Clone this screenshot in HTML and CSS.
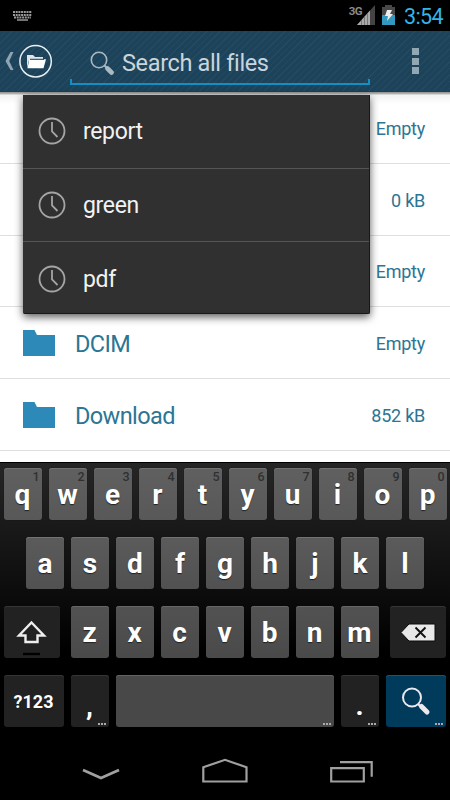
FILE: index.html
```html
<!DOCTYPE html>
<html lang="en">
<head>
<meta charset="utf-8">
<title>Search files</title>
<link rel="stylesheet" href="styles.css">
</head>
<body>
<div class="phone">
  <header class="status">
    <svg class="kbd" width="19" height="10" viewBox="0 0 19 10"><path d="M0 1h19M0 4h19M1 6.500h17" stroke="#999" stroke-width="2" stroke-dasharray="2 .7"/><path d="M4 9h11" stroke="#999" stroke-width="1.500"/></svg>
    <span class="net">3G</span>
    <svg class="signal" width="18" height="20" viewBox="0 0 18 20"><path d="M18 0v20H0z" fill="#444"/><path d="M13 5.600V20H0z" fill="#aaa"/><path d="M4.500 15v5M7.500 11.700v8.300M10.500 8.400v11.600" stroke="#777" stroke-width="1"/></svg>
    <svg class="battery" width="13" height="20" viewBox="0 0 13 20"><path d="M3 0h7v2h3v18H0V2h3z" fill="#484848"/><path d="M0 10h13v10H0z" fill="#3398bf"/><path d="M5 5h5L8 9h3l-6 7 1-5H3z" fill="#eee"/></svg>
    <time class="clock">3:54</time>
  </header>

  <div class="bar">
    <svg class="up" width="54" height="60" viewBox="0 0 54 60">
      <path d="M13.500 21H10.500L5.500 30l5 9h3L9.200 30z" fill="#8ea4b2"/>
      <circle cx="35.600" cy="30.300" r="15.700" fill="none" stroke="#e8f0f3" stroke-width="1.500"/>
      <path d="M27 24h6l2 2h8v3H29l-2 8z" fill="#dfe5e8"/>
      <path d="M29.300 28.300H46l-2.500 9H27.500z" fill="#fff"/><path d="M30 28.300h14" stroke="#17394b"/>
    </svg>
    <div class="field">
      <svg width="24" height="24" viewBox="0 0 24 24"><circle cx="9" cy="9" r="7.700" fill="none" stroke="#a9bac4" stroke-width="1.600"/><path d="M14.500 14.500l2 2" stroke="#a9bac4" stroke-width="2"/><path d="M17.500 17.500l4 4" stroke="#a9bac4" stroke-width="4.600" stroke-linecap="round"/></svg>
      <span class="hint">Search all files</span>
    </div>
    <div class="more"><i></i><i></i><i></i></div>
  </div>

  <main class="list">
    <div class="row"><span class="size">Empty</span></div>
    <div class="row"><span class="size">0 kB</span></div>
    <div class="row"><span class="size">Empty</span></div>
    <div class="row"><svg class="folder" width="32" height="26" viewBox="0 0 32 26"><path d="M0 0h11.500l2.500 5h18v21H0z"/></svg><span class="name">DCIM</span><span class="size">Empty</span></div>
    <div class="row"><svg class="folder" width="32" height="26" viewBox="0 0 32 26"><path d="M0 0h11.500l2.500 5h18v21H0z"/></svg><span class="name">Download</span><span class="size">852 kB</span></div>
    <div class="menu">
      <div class="item"><svg class="recent" width="28" height="28" viewBox="0 0 28 28"><circle cx="14" cy="14" r="12.500"/><path d="M14 5v9.500l5.500 5.500"/></svg>report</div>
      <div class="item"><svg class="recent" width="28" height="28" viewBox="0 0 28 28"><circle cx="14" cy="14" r="12.500"/><path d="M14 5v9.500l5.500 5.500"/></svg>green</div>
      <div class="item"><svg class="recent" width="28" height="28" viewBox="0 0 28 28"><circle cx="14" cy="14" r="12.500"/><path d="M14 5v9.500l5.500 5.500"/></svg>pdf</div>
    </div>
  </main>

  <section class="keyboard">
    <div class="keys k1">
      <b class="key">q<sup>1</sup></b><b class="key">w<sup>2</sup></b><b class="key">e<sup>3</sup></b><b class="key">r<sup>4</sup></b><b class="key">t<sup>5</sup></b><b class="key">y<sup>6</sup></b><b class="key">u<sup>7</sup></b><b class="key">i<sup>8</sup></b><b class="key">o<sup>9</sup></b><b class="key">p<sup>0</sup></b>
    </div>
    <div class="keys k2">
      <b class="key">a</b><b class="key">s</b><b class="key">d</b><b class="key">f</b><b class="key">g</b><b class="key">h</b><b class="key">j</b><b class="key">k</b><b class="key">l</b>
    </div>
    <div class="keys k3">
      <b class="key dark wide"><svg width="56" height="52" viewBox="0 0 56 52"><path d="M27.500 16.500L40 29.500h-6.500V36H21.500v-6.500H15z" fill="none" stroke="#eee" stroke-width="2.400"/><path d="M19 48h17" stroke="#000" stroke-width="2.400"/></svg></b>
      <b class="key">z</b><b class="key">x</b><b class="key">c</b><b class="key">v</b><b class="key">b</b><b class="key">n</b><b class="key">m</b>
      <b class="key dark wide"><svg width="56" height="52" viewBox="0 0 56 52"><path d="M11 26.500l8-8.500h26v17H19z" fill="#e8e8e8" stroke="#0b0b0b" stroke-width="1"/><path d="M25.500 21.500l10 10m0-10l-10 10" stroke="#111" stroke-width="1.900"/></svg></b>
    </div>
    <div class="keys k4">
      <b class="key dark num">?123</b><b class="key dark low">,<em></em></b><b class="key space"><em></em></b><b class="key dark low">.<em></em></b>
      <b class="key go"><svg width="60" height="52" viewBox="0 0 60 52"><circle cx="26" cy="22.500" r="9" fill="none" stroke="#e9e9ee" stroke-width="2"/><path d="M32 29l3 3" stroke="#e9e9ee" stroke-width="2.200"/><path d="M35.500 31.500l5.500 5.500" stroke="#e9e9ee" stroke-width="5" stroke-linecap="round"/></svg><em></em></b>
    </div>
  </section>

  <nav class="nav">
    <svg width="450" height="60" viewBox="0 0 450 60" fill="none" stroke="#a0a0a0" stroke-width="2.200">
      <path d="M83 30l18 8 18-8" stroke-width="2.800"/>
      <path d="M203.300 41.500V27.300L225 19.800l21.500 7.500v14.200z"/>
      <path d="M331.200 28.200h32.600v13.300h-32.600zM340 22.200h31.700v14.500"/>
    </svg>
  </nav>
</div>
</body>
</html>
```
FILE: styles.css
```css
* { box-sizing: border-box; }
body { margin: 0; background: #000; font-family: Roboto, "Liberation Sans", sans-serif; }
.phone { width: 450px; height: 800px; overflow: hidden; display: flex; flex-direction: column; background: #000; }
svg { display: block; flex: none; }

.status { height: 31px; flex: none; display: flex; align-items: flex-start; padding: 0 8px 0 13px; }
.kbd { margin: 11px auto 0 0; }
.net { font-size: 11.500px; line-height: 12px; font-weight: 700; letter-spacing: -.6px; color: #8a8a8a; margin: 5px -5px 0 0; }
.signal { margin: 5px 7px 0 0; }
.battery { margin: 5px 9px 0 0; }
.clock { font-size: 21.500px; line-height: 33px; letter-spacing: -.6px; color: #33b5e5; width: 38px; white-space: nowrap; }

.bar {
  height: 61px; flex: none; display: flex;
  background: repeating-linear-gradient(135deg, #1d435a 0 3.600px, #234a60 3.600px 4.600px);
  border-bottom: 1px solid #0a4863;
}
.field {
  width: 300px; height: 54px; margin-left: 16px; display: flex; align-items: center; padding: 10px 0 0 20px;
  background:
    linear-gradient(#138fc4, #138fc4) 0 100% / 300px 2px no-repeat,
    linear-gradient(#138fc4, #138fc4) 0 100% / 2px 6px no-repeat,
    linear-gradient(#138fc4, #138fc4) 100% 100% / 2px 6px no-repeat;
}
.hint { font-size: 23.500px; letter-spacing: -.35px; color: #c9d5dd; margin-left: 8px; white-space: nowrap; }
.more { width: 7px; margin: 17px 0 0 42px; display: flex; flex-direction: column; gap: 2.500px; }
.more i { width: 7px; height: 7px; background: #91a7b4; }

.list {
  position: relative; height: 370px; flex: none;
  background: linear-gradient(#8d8d8d, #bbb 2px, #f2f2f2 3px, #fff 12px);
}
.row { height: 71.800px; display: flex; align-items: center; padding: 2px 25px 0 23px; border-bottom: 1px solid #dedede; color: #2c7594; }
.folder { fill: #2d8ab8; margin: -2px 20px 0 0; }
.name { font-size: 23.500px; letter-spacing: -.6px; }
.size { font-size: 18px; letter-spacing: -.25px; margin-left: auto; }
.menu {
  position: absolute; left: 23px; top: 3px; width: 347px; height: 219px; background: #303030;
  border: 1px solid #181818; border-width: 0 1px 1px 0; border-radius: 0 0 2px 2px;
  box-shadow: 0 3px 8px rgba(0,0,0,.65);
}
.item { height: 73.600px; display: flex; align-items: center; padding: 1px 0 0 15px; color: #f2f2f2; font-size: 23px; letter-spacing: -.35px; border-bottom: 1px solid #555; }
.item:last-child { border-bottom: 0; }
.recent { fill: none; stroke: #a5a5a5; stroke-width: 1.800; margin: -1px 17px 0 0; }

.keyboard {
  height: 276px; flex: none; padding: 5px 3.500px 0; display: flex; flex-direction: column; gap: 17px;
  background: linear-gradient(#262626, #000 190px); border-top: 1px solid #000;
}
.keys { display: flex; gap: 7px; height: 52px; flex: none; }
.k2 { padding-left: 22.500px; }
.key {
  position: relative; width: 38px; height: 52px; flex: none; display: flex; align-items: center; justify-content: center;
  padding-top: 1px; border-radius: 3px; font-size: 28px; font-weight: 700; color: #fff; text-shadow: 0 1px 1px #222;
  background: linear-gradient(#606060, #585858); box-shadow: inset 0 1px #737373, 0 0 1px #111;
}
.k2 .key { background: linear-gradient(#5b5b5b, #515151); }
.k3 .key { background: linear-gradient(#525252, #4a4a4a); box-shadow: inset 0 1px #666; }
.k3 .wide { width: 56px; }
.k3 .wide:first-child { margin-right: 4px; }
.k3 .wide:last-child { margin-left: 4px; }
.key.wide, .key.go { padding: 0; }
.key sup { position: absolute; right: 2px; top: 1px; font-size: 12.500px; line-height: 15px; color: #303030; text-shadow: none; font-weight: 500; }
.keys .key.dark { background: #222; box-shadow: inset 0 1px #353535; }
.keys .key.num { width: 60px; font-size: 18px; }
.key.low { padding-top: 9px; }
.key.space { width: 218px; background: #484848; box-shadow: inset 0 1px #636363; }
.key.go { width: 60px; background: #003b5c; box-shadow: inset 0 1px #1e5270; }
.key em { position: absolute; right: 3px; bottom: 2px; width: 8px; height: 2px; background: repeating-linear-gradient(90deg, #aaa 0 2px, transparent 2px 3px); }
.nav { height: 62px; flex: none; padding-top: 2px; }
```
